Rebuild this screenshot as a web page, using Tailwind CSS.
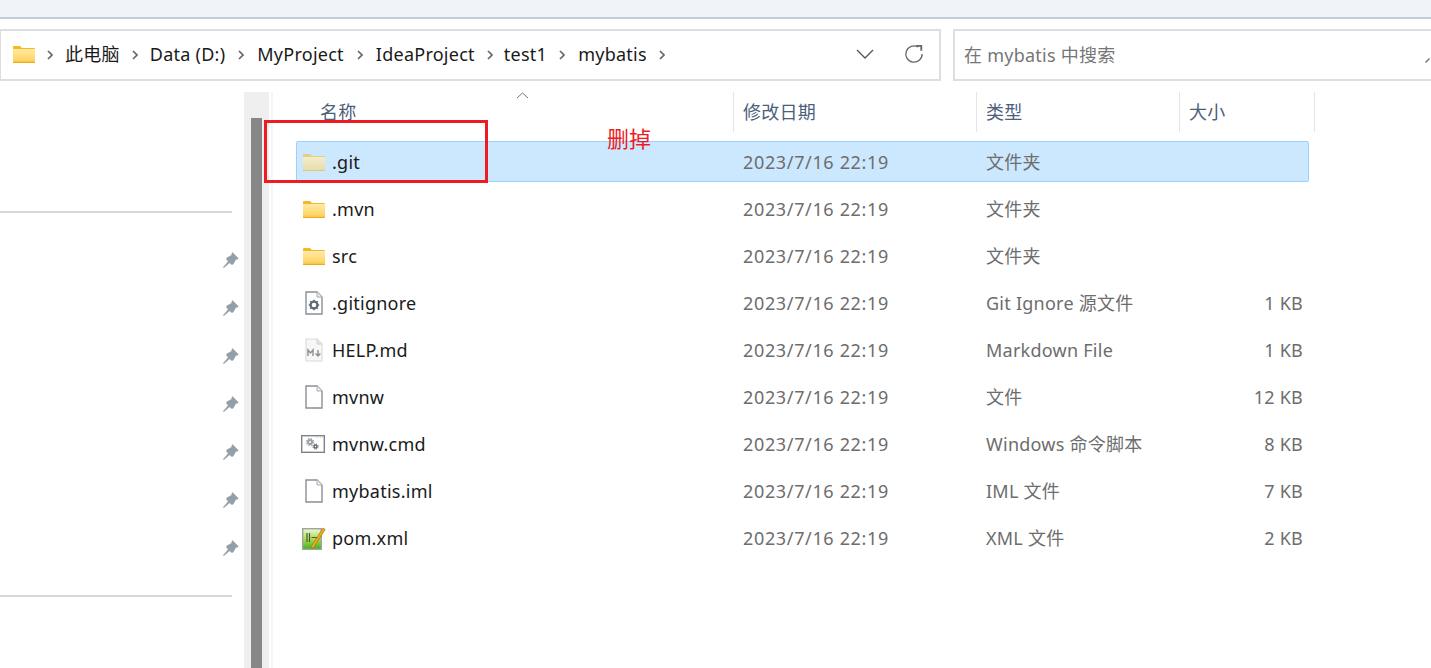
<!DOCTYPE html>
<html lang="zh">
<head>
<meta charset="utf-8">
<script src="https://cdn.jsdelivr.net/npm/@tailwindcss/browser@4"></script>
</head>
<body class="bg-white">
<svg class="absolute w-0 h-0" aria-hidden="true">
  <defs>
    <linearGradient id="fg" x1="0" y1="0" x2="0" y2="1"><stop offset="0" stop-color="#ffeaa6"/><stop offset="0.75" stop-color="#ffd768"/><stop offset="1" stop-color="#f5bd3c"/></linearGradient>
    <linearGradient id="fgd" x1="0" y1="0" x2="0" y2="1"><stop offset="0" stop-color="#f3edc9"/><stop offset="1" stop-color="#e6dcaa"/></linearGradient>
    <linearGradient id="pg" x1="0" y1="0" x2="0" y2="1"><stop offset="0" stop-color="#eef6dc"/><stop offset="0.5" stop-color="#a9dc50"/><stop offset="1" stop-color="#3fae25"/></linearGradient>
    <symbol id="folder" viewBox="0 0 22 18">
      <path d="M0 2a1 1 0 0 1 1-1h6l2 2h12a1 1 0 0 1 1 1v13a1 1 0 0 1-1 1H1a1 1 0 0 1-1-1z" fill="#f6b91f"/>
      <path d="M0 4h22v13a1 1 0 0 1-1 1H1a1 1 0 0 1-1-1z" fill="url(#fg)"/>
      <path d="M0 17h22v1H0z" fill="#eeaa20"/>
    </symbol>
    <symbol id="pin" viewBox="0 0 16 16">
      <path d="M9.5.3 15.7 6.5 14.5 7.5 13 7.5 10.5 12 9 13 6.5 11 .8 16 0 15.2 5 9.5 3 7 4 5.5 8.5 3 8.5 1.5Z" fill="#93a0a8"/>
    </symbol>
    <symbol id="doc" viewBox="0 0 18 24">
      <path d="M1 1h11l5 5v17H1z" fill="#fff" stroke="#8a8f94" stroke-width="1.4"/>
      <path d="M12 1v5h5" fill="#f0f0f0" stroke="#a8acb0" stroke-width="1"/>
    </symbol>
    <symbol id="chev" viewBox="0 0 6 10">
      <path d="M1 1l4 4-4 4" fill="none" stroke="#666" stroke-width="1.7"/>
    </symbol>
  </defs>
</svg>

<div class="w-[1431px] h-[668px] overflow-hidden flex flex-col bg-white font-['Noto_Sans','Noto_Sans_CJK_SC',sans-serif] text-[18px] tracking-[0.25px] leading-none relative">

  <div class="h-[19px] shrink-0 bg-[#f0f4f8] border-b-2 border-[#c2ccd4]"></div>

  <div class="flex h-[52px] mt-[10px] shrink-0">
    <div class="w-[941px] border-2 border-[#dedede] border-l-[1px] flex items-center pl-[12px] pb-[2px] text-[#1a1a1a]">
      <svg class="w-[22px] h-[18px] mr-[12px] shrink-0"><use href="#folder"/></svg>
      <svg class="w-[6px] h-[10px] mt-[2px] mr-[12px] shrink-0"><use href="#chev"/></svg>
      <span>此电脑</span>
      <svg class="w-[6px] h-[10px] mt-[2px] mx-[12px] shrink-0"><use href="#chev"/></svg>
      <span>Data (D:)</span>
      <svg class="w-[6px] h-[10px] mt-[2px] mx-[13px] shrink-0"><use href="#chev"/></svg>
      <span>MyProject</span>
      <svg class="w-[6px] h-[10px] mt-[2px] mx-[13px] shrink-0"><use href="#chev"/></svg>
      <span>IdeaProject</span>
      <svg class="w-[6px] h-[10px] mt-[2px] ml-[12px] mr-[11px] shrink-0"><use href="#chev"/></svg>
      <span>test1</span>
      <svg class="w-[6px] h-[10px] mt-[2px] ml-[12px] mr-[13px] shrink-0"><use href="#chev"/></svg>
      <span>mybatis</span>
      <svg class="w-[6px] h-[10px] mt-[2px] mx-[12px] shrink-0"><use href="#chev"/></svg>
      <svg class="w-[18px] h-[10px] ml-auto mr-[30px]" viewBox="0 0 18 10" fill="none" stroke="#555" stroke-width="1.3"><path d="M1 1l8 8 8-8"/></svg>
      <svg class="w-[20px] h-[20px] mr-[15px]" viewBox="0 0 22 22" fill="none" stroke="#666" stroke-width="1.4"><path d="M15.5 3.2A9 9 0 1 0 20 11"/><path d="M13.5 1 20 1 20 7.5 18 7.5 18 3 13.5 3z" fill="#666" stroke="none"/></svg>
    </div>
    <div class="ml-[12px] flex-1 border-2 border-[#dedede] border-r-0 flex items-center pl-[9px] text-[#767676] relative">
      <span>在 mybatis 中搜索</span>
      <svg class="absolute right-0 top-[22px] w-[6px] h-[10px]" viewBox="0 0 6 10"><path d="M0 9 4 5 5 6 1 10z" fill="#777"/></svg>
    </div>
  </div>

  <div class="flex flex-1 mt-[11px] min-h-0">
    <aside class="w-[244px] shrink-0 flex flex-col items-stretch">
      <div class="h-[121px] shrink-0 border-b-2 border-[#d6d6d6] w-[232px]"></div>
      <div class="h-[384px] shrink-0 w-[232px] border-b-2 border-[#d6d6d6] flex flex-col items-end pt-[39px] gap-[32px]">
        <svg class="w-[16px] h-[16px] mr-[-7px] shrink-0"><use href="#pin"/></svg>
        <svg class="w-[16px] h-[16px] mr-[-7px] shrink-0"><use href="#pin"/></svg>
        <svg class="w-[16px] h-[16px] mr-[-7px] shrink-0"><use href="#pin"/></svg>
        <svg class="w-[16px] h-[16px] mr-[-7px] shrink-0"><use href="#pin"/></svg>
        <svg class="w-[16px] h-[16px] mr-[-7px] shrink-0"><use href="#pin"/></svg>
        <svg class="w-[16px] h-[16px] mr-[-7px] shrink-0"><use href="#pin"/></svg>
        <svg class="w-[16px] h-[16px] mr-[-7px] shrink-0"><use href="#pin"/></svg>
      </div>
    </aside>

    <div class="w-[25px] shrink-0 bg-[#efefef] pl-[7px] pt-[26px]">
      <div class="w-[11px] h-full bg-[#878787]"></div>
    </div>
    <div class="w-[2px] shrink-0"></div>
    <div class="w-[2px] shrink-0 bg-[#f5f5f5]"></div>

    <main class="flex-1 min-w-0">
      <div class="relative h-[40px] text-[#4c607a] flex">
        <div class="w-[461px] h-full border-r border-[#e5e5e5] pl-[47px] pt-[11px] relative">
          名称
          <svg class="absolute left-[243px] top-0 w-[13px] h-[7px]" viewBox="0 0 13 7" fill="none" stroke="#777" stroke-width="1"><path d="M1 6l5.5-5 5.5 5"/></svg>
        </div>
        <div class="w-[243px] h-full border-r border-[#e5e5e5] pl-[9px] pt-[11px]">修改日期</div>
        <div class="w-[203px] h-full border-r border-[#e5e5e5] pl-[9px] pt-[11px]">类型</div>
        <div class="w-[135px] h-full border-r border-[#e5e5e5] pl-[9px] pt-[11px]">大小</div>
      </div>

      <div class="mt-[9px] ml-[23px] w-[1013px] flex flex-col text-[#6d6d6d]">

        <div class="h-[41px] mb-[6px] flex items-center bg-[#cce8ff] border border-[#99d1ff] rounded-[2px]">
          <svg class="ml-[6px] w-[22px] h-[18px] shrink-0" viewBox="0 0 22 18">
            <path d="M0 2a1 1 0 0 1 1-1h6l2 2h12a1 1 0 0 1 1 1v13a1 1 0 0 1-1 1H1a1 1 0 0 1-1-1z" fill="#e4cf85"/>
            <path d="M0 4h22v13a1 1 0 0 1-1 1H1a1 1 0 0 1-1-1z" fill="url(#fgd)"/>
            <path d="M0 17h22v1H0z" fill="#dcc77c"/>
          </svg>
          <span class="w-[418px] pl-[7px] text-[#1a1a1a] shrink-0">.git</span>
          <span class="w-[243px] shrink-0 tracking-[0.65px]">2023/7/16 22:19</span>
          <span class="flex-1">文件夹</span>
        </div>

        <div class="h-[41px] mb-[6px] flex items-center border border-transparent">
          <svg class="ml-[6px] w-[22px] h-[18px] shrink-0"><use href="#folder"/></svg>
          <span class="w-[418px] pl-[7px] text-[#1a1a1a] shrink-0">.mvn</span>
          <span class="w-[243px] shrink-0 tracking-[0.65px]">2023/7/16 22:19</span>
          <span class="flex-1">文件夹</span>
        </div>

        <div class="h-[41px] mb-[6px] flex items-center border border-transparent">
          <svg class="ml-[6px] w-[22px] h-[18px] shrink-0"><use href="#folder"/></svg>
          <span class="w-[418px] pl-[7px] text-[#1a1a1a] shrink-0">src</span>
          <span class="w-[243px] shrink-0 tracking-[0.65px]">2023/7/16 22:19</span>
          <span class="flex-1">文件夹</span>
        </div>

        <div class="h-[41px] mb-[6px] flex items-center border border-transparent">
          <span class="ml-[6px] w-[22px] h-[24px] shrink-0 flex justify-center">
            <svg class="w-[18px] h-[24px]" viewBox="0 0 18 24">
              <path d="M1 1h11l5 5v17H1z" fill="#fff" stroke="#8a8f94" stroke-width="1.4"/>
              <path d="M12 1v5h5" fill="#eee" stroke="#aaa" stroke-width="1"/>
              <circle cx="9" cy="14" r="3.4" fill="none" stroke="#5b6b78" stroke-width="2.2"/>
              <path d="M9 8.8v2M9 17.2v2M3.8 14h2M12.2 14h2M5.3 10.3l1.4 1.4M11.3 16.3l1.4 1.4M12.7 10.3l-1.4 1.4M6.7 16.3l-1.4 1.4" stroke="#5b6b78" stroke-width="1.5"/>
            </svg>
          </span>
          <span class="w-[418px] pl-[7px] text-[#1a1a1a] shrink-0">.gitignore</span>
          <span class="w-[243px] shrink-0 tracking-[0.65px]">2023/7/16 22:19</span>
          <span class="w-[250px] shrink-0">Git Ignore 源文件</span>
          <span class="flex-1 text-right pr-[5px] whitespace-nowrap">1 KB</span>
        </div>

        <div class="h-[41px] mb-[6px] flex items-center border border-transparent">
          <span class="ml-[6px] w-[22px] h-[24px] shrink-0 flex justify-center">
            <svg class="w-[18px] h-[24px]" viewBox="0 0 18 24">
              <path d="M1 1h11l5 5v17H1z" fill="#f7f7f7" stroke="#dcdcdc" stroke-width="1.2"/>
              <path d="M12 1v5h5" fill="#e4e4e4" stroke="#d0d0d0" stroke-width="1"/>
              <path d="M3 18v-6l2.5 3 2.5-3v6M13 12v6M10.6 15.6 13 18l2.4-2.4" fill="none" stroke="#8e8e8e" stroke-width="1.4"/>
            </svg>
          </span>
          <span class="w-[418px] pl-[7px] text-[#1a1a1a] shrink-0">HELP.md</span>
          <span class="w-[243px] shrink-0 tracking-[0.65px]">2023/7/16 22:19</span>
          <span class="w-[250px] shrink-0">Markdown File</span>
          <span class="flex-1 text-right pr-[5px] whitespace-nowrap">1 KB</span>
        </div>

        <div class="h-[41px] mb-[6px] flex items-center border border-transparent">
          <span class="ml-[6px] w-[22px] h-[24px] shrink-0 flex justify-center">
            <svg class="w-[18px] h-[24px]"><use href="#doc"/></svg>
          </span>
          <span class="w-[418px] pl-[7px] text-[#1a1a1a] shrink-0">mvnw</span>
          <span class="w-[243px] shrink-0 tracking-[0.65px]">2023/7/16 22:19</span>
          <span class="w-[250px] shrink-0">文件</span>
          <span class="flex-1 text-right pr-[5px] whitespace-nowrap">12 KB</span>
        </div>

        <div class="h-[41px] mb-[6px] flex items-center border border-transparent">
          <span class="ml-[5px] mr-[1px] w-[22px] h-[18px] shrink-0 flex justify-center">
            <svg class="w-[24px] h-[18px] shrink-0" viewBox="0 0 24 18">
              <rect x="0.7" y="0.7" width="22.6" height="16.6" fill="#fff" stroke="#7e8387" stroke-width="1.4"/>
              <circle cx="9" cy="7" r="2" fill="none" stroke="#9aa2a8" stroke-width="2"/>
              <circle cx="9" cy="7" r="3.4" fill="none" stroke="#9aa2a8" stroke-width="1.4" stroke-dasharray="1.4 1.3"/>
              <circle cx="14.5" cy="11.5" r="1.5" fill="none" stroke="#5d666d" stroke-width="1.4"/>
              <circle cx="14.5" cy="11.5" r="2.6" fill="none" stroke="#5d666d" stroke-width="1" stroke-dasharray="1.1 1"/>
              <path d="M15 2.2h7" stroke="#ccc" stroke-width="1.2" stroke-dasharray="1 1"/>
            </svg>
          </span>
          <span class="w-[418px] pl-[7px] text-[#1a1a1a] shrink-0">mvnw.cmd</span>
          <span class="w-[243px] shrink-0 tracking-[0.65px]">2023/7/16 22:19</span>
          <span class="w-[250px] shrink-0">Windows 命令脚本</span>
          <span class="flex-1 text-right pr-[5px] whitespace-nowrap">8 KB</span>
        </div>

        <div class="h-[41px] mb-[6px] flex items-center border border-transparent">
          <span class="ml-[6px] w-[22px] h-[24px] shrink-0 flex justify-center">
            <svg class="w-[18px] h-[24px]"><use href="#doc"/></svg>
          </span>
          <span class="w-[418px] pl-[7px] text-[#1a1a1a] shrink-0">mybatis.iml</span>
          <span class="w-[243px] shrink-0 tracking-[0.65px]">2023/7/16 22:19</span>
          <span class="w-[250px] shrink-0">IML 文件</span>
          <span class="flex-1 text-right pr-[5px] whitespace-nowrap">7 KB</span>
        </div>

        <div class="h-[41px] mb-[6px] flex items-center border border-transparent">
          <span class="ml-[6px] w-[22px] h-[24px] shrink-0 flex justify-center">
            <svg class="w-[24px] h-[24px] shrink-0" viewBox="0 0 24 24">
              <rect x="0.7" y="2.7" width="18.6" height="20.6" fill="url(#pg)" stroke="#9aa79a" stroke-width="1.4"/>
              <path d="M5 7v9M7.5 7v9M9.5 11.5h6" stroke="#4a5a40" stroke-width="1.2"/>
              <path d="M9 21 21 2l2.2 1.4-12 19z" fill="#f3a81e" stroke="#9c6a10" stroke-width="0.6"/>
            </svg>
          </span>
          <span class="w-[418px] pl-[7px] text-[#1a1a1a] shrink-0">pom.xml</span>
          <span class="w-[243px] shrink-0 tracking-[0.65px]">2023/7/16 22:19</span>
          <span class="w-[250px] shrink-0">XML 文件</span>
          <span class="flex-1 text-right pr-[5px] whitespace-nowrap">2 KB</span>
        </div>

      </div>
    </main>
  </div>

  <div class="absolute left-[264px] top-[120px] w-[224px] h-[63px] border-[3px] border-[#ed1c24]"></div>
  <div class="absolute left-[607px] top-[127px] text-[#ed1c24] text-[22px] tracking-normal leading-[22px]">删掉</div>
</div>
</body>
</html>
